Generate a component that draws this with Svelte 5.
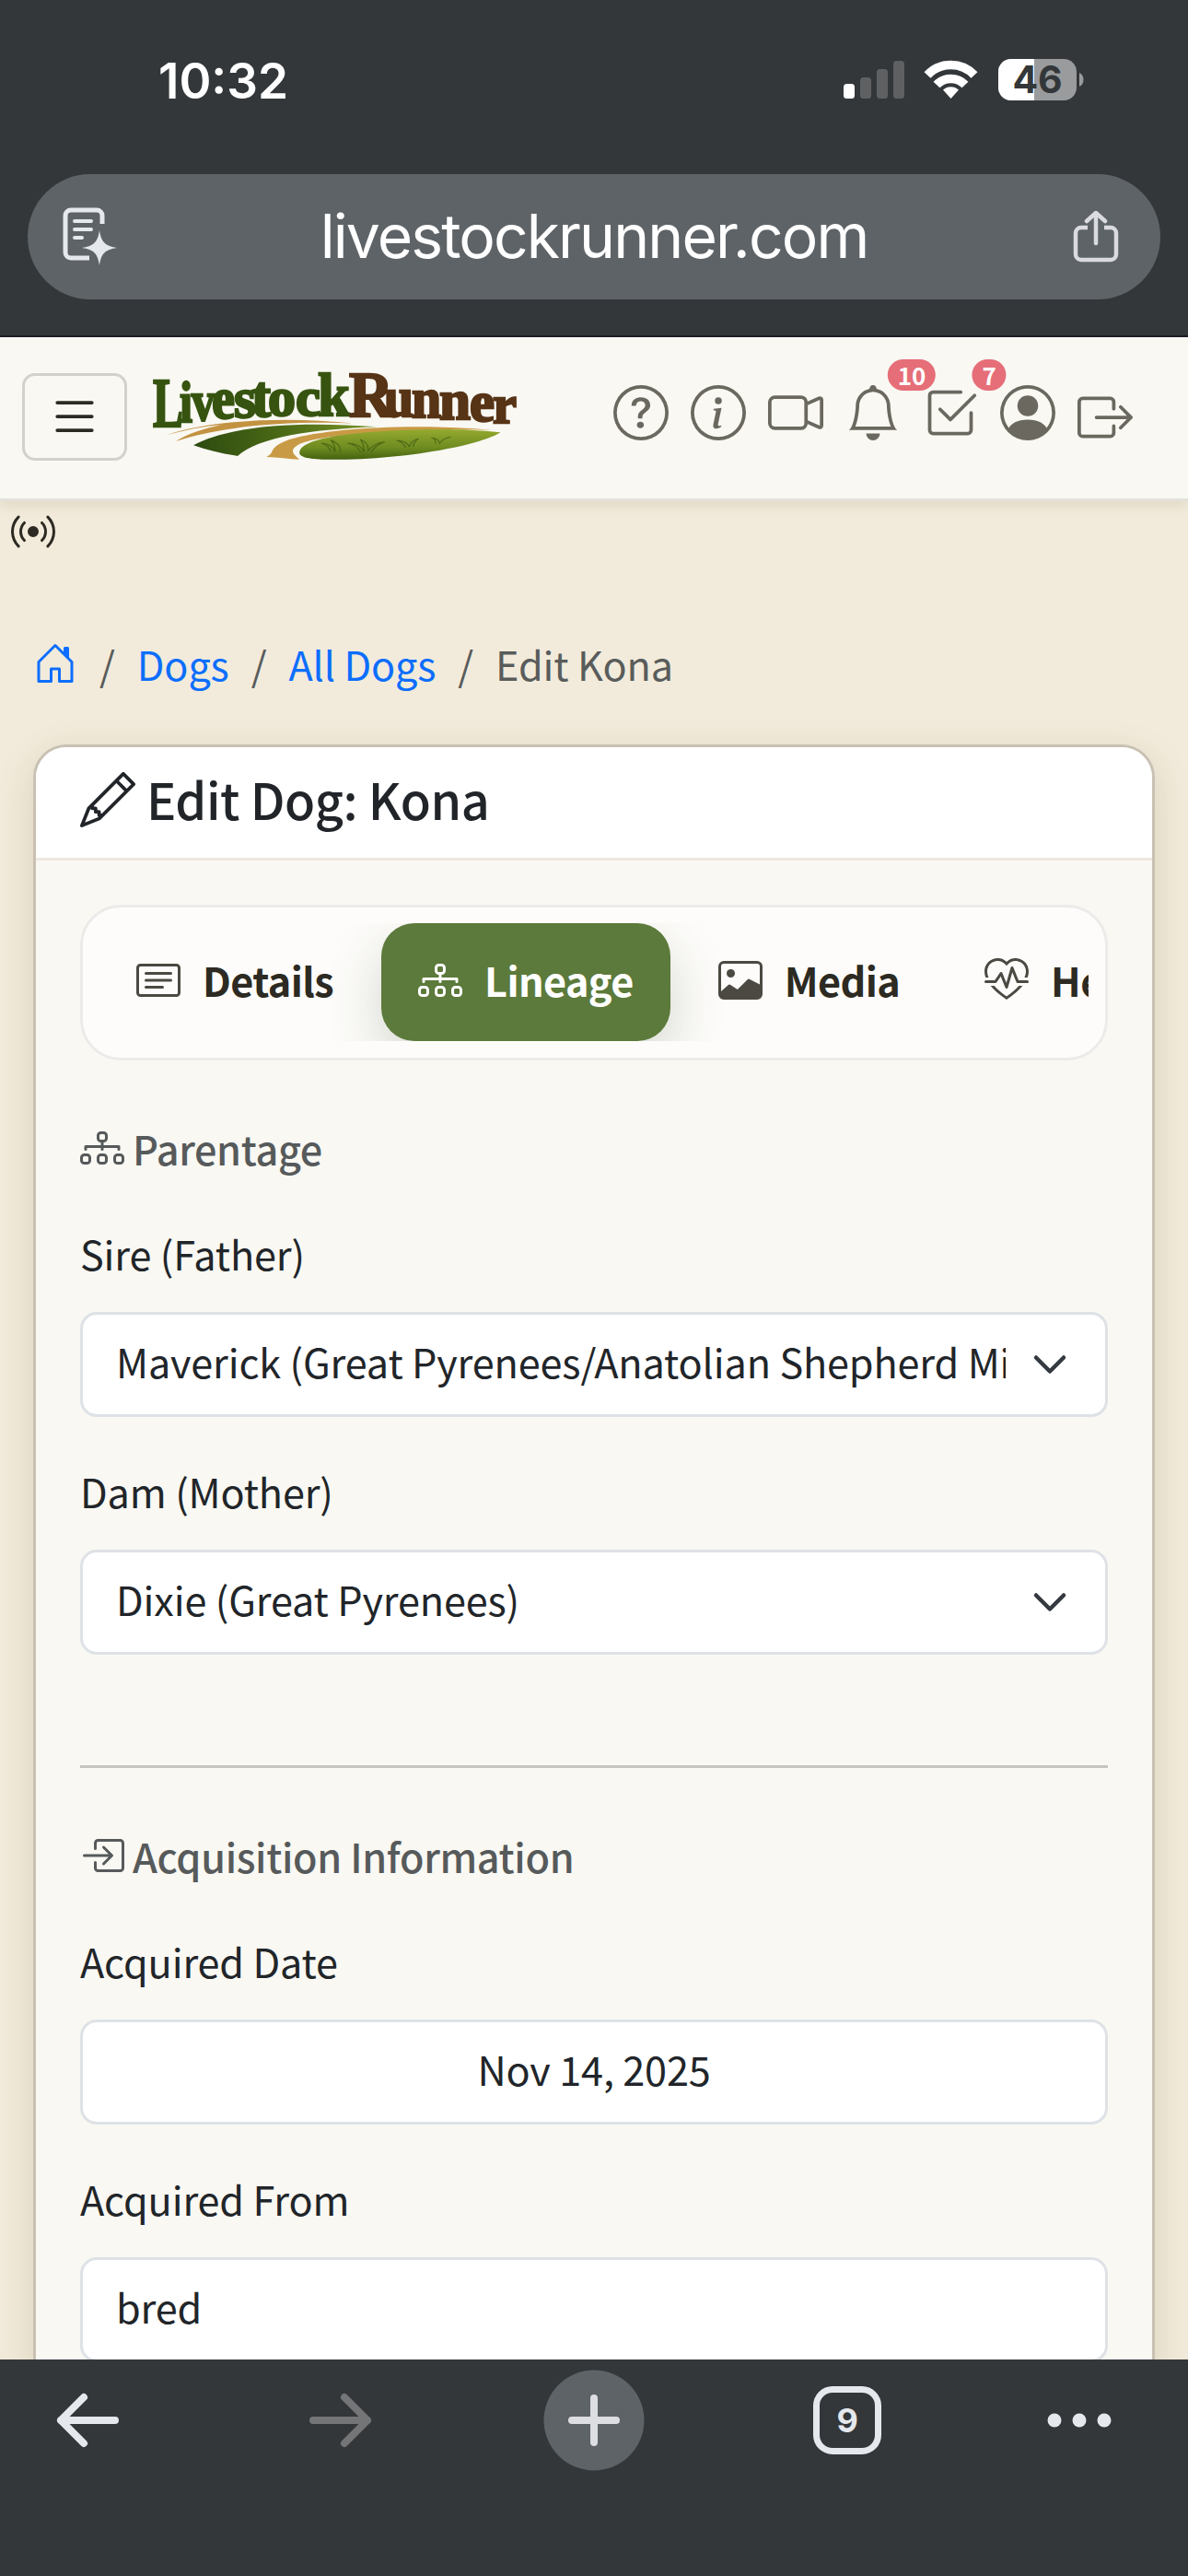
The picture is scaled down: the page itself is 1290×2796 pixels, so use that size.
<script lang="ts">
    // 16x16 icon paths
    const icons: Record<string, string[]> = {
        list: ['M2.5 12a.5.5 0 0 1 .5-.5h10a.5.5 0 0 1 0 1H3a.5.5 0 0 1-.5-.5m0-4a.5.5 0 0 1 .5-.5h10a.5.5 0 0 1 0 1H3a.5.5 0 0 1-.5-.5m0-4a.5.5 0 0 1 .5-.5h10a.5.5 0 0 1 0 1H3a.5.5 0 0 1-.5-.5'],
        question: [
            'M8 15A7 7 0 1 1 8 1a7 7 0 0 1 0 14m0 1A8 8 0 1 0 8 0a8 8 0 0 0 0 16',
            'M5.255 5.786a.237.237 0 0 0 .241.247h.825c.138 0 .248-.113.266-.25.09-.656.54-1.134 1.342-1.134.686 0 1.314.343 1.314 1.168 0 .635-.374.927-.965 1.371-.673.489-1.206 1.06-1.168 1.987l.003.217a.25.25 0 0 0 .25.246h.811a.25.25 0 0 0 .25-.25v-.105c0-.718.273-.927 1.01-1.486.609-.463 1.244-.977 1.244-2.056 0-1.511-1.276-2.241-2.673-2.241-1.267 0-2.655.59-2.75 2.286m1.557 5.763c0 .533.425.927 1.01.927.609 0 1.028-.394 1.028-.927 0-.552-.42-.94-1.029-.94-.584 0-1.009.388-1.009.94'
        ],
        info: [
            'M8 15A7 7 0 1 1 8 1a7 7 0 0 1 0 14m0 1A8 8 0 1 0 8 0a8 8 0 0 0 0 16',
            'm8.93 6.588-2.29.287-.082.38.45.083c.294.07.352.176.288.469l-.738 3.468c-.194.897.105 1.319.808 1.319.545 0 1.178-.252 1.465-.598l.088-.416c-.2.176-.492.246-.686.246-.275 0-.375-.193-.304-.533zM9 4.5a1 1 0 1 1-2 0 1 1 0 0 1 2 0'
        ],
        video: ['M0 5a2 2 0 0 1 2-2h7.5a2 2 0 0 1 1.983 1.738l3.11-1.382A1 1 0 0 1 16 4.269v7.462a1 1 0 0 1-1.406.913l-3.111-1.382A2 2 0 0 1 9.5 13H2a2 2 0 0 1-2-2zm11.5 5.175 3.5 1.556V4.269l-3.5 1.556zM2 4a1 1 0 0 0-1 1v6a1 1 0 0 0 1 1h7.5a1 1 0 0 0 1-1V5a1 1 0 0 0-1-1z'],
        bell: ['M8 16a2 2 0 0 0 2-2H6a2 2 0 0 0 2 2M8 1.918l-.797.161A4 4 0 0 0 4 6c0 .628-.134 2.197-.459 3.742-.16.767-.376 1.566-.663 2.258h10.244c-.287-.692-.502-1.49-.663-2.258C12.134 8.197 12 6.628 12 6a4 4 0 0 0-3.203-3.92zM14.22 12c.223.447.481.801.78 1H1c.299-.199.557-.553.78-1C2.68 10.2 3 6.88 3 6c0-2.42 1.72-4.44 4.005-4.901a1 1 0 1 1 1.99 0A5 5 0 0 1 13 6c0 .88.32 4.2 1.22 6'],
        check: [
            'M3 14.5A1.5 1.5 0 0 1 1.5 13V3A1.5 1.5 0 0 1 3 1.5h8a.5.5 0 0 1 0 1H3a.5.5 0 0 0-.5.5v10a.5.5 0 0 0 .5.5h10a.5.5 0 0 0 .5-.5V8a.5.5 0 0 1 1 0v5a1.5 1.5 0 0 1-1.5 1.5z',
            'm8.354 10.354 7-7a.5.5 0 0 0-.708-.708L8 9.293 5.354 6.646a.5.5 0 1 0-.708.708l3 3a.5.5 0 0 0 .708 0'
        ],
        person: [
            'M11 6a3 3 0 1 1-6 0 3 3 0 0 1 6 0',
            'M0 8a8 8 0 1 1 16 0A8 8 0 0 1 0 8m8-7a7 7 0 0 0-5.468 11.37C3.242 11.226 4.805 10 8 10s4.757 1.225 5.468 2.37A7 7 0 0 0 8 1'
        ],
        logout: [
            'M10 12.5a.5.5 0 0 1-.5.5h-8a.5.5 0 0 1-.5-.5v-9a.5.5 0 0 1 .5-.5h8a.5.5 0 0 1 .5.5v2a.5.5 0 0 0 1 0v-2A1.5 1.5 0 0 0 9.5 2h-8A1.5 1.5 0 0 0 0 3.5v9A1.5 1.5 0 0 0 1.5 14h8a1.5 1.5 0 0 0 1.5-1.5v-2a.5.5 0 0 0-1 0z',
            'M15.854 8.354a.5.5 0 0 0 0-.708l-3-3a.5.5 0 0 0-.708.708L14.293 7.5H5.5a.5.5 0 0 0 0 1h8.793l-2.147 2.146a.5.5 0 0 0 .708.708z'
        ],
        login: [
            'M6 3.5a.5.5 0 0 1 .5-.5h8a.5.5 0 0 1 .5.5v9a.5.5 0 0 1-.5.5h-8a.5.5 0 0 1-.5-.5v-2a.5.5 0 0 0-1 0v2A1.5 1.5 0 0 0 6.5 14h8a1.5 1.5 0 0 0 1.5-1.5v-9A1.5 1.5 0 0 0 14.5 2h-8A1.5 1.5 0 0 0 5 3.5v2a.5.5 0 0 0 1 0z',
            'M11.854 8.354a.5.5 0 0 0 0-.708l-3-3a.5.5 0 1 0-.708.708L10.293 7.5H1.5a.5.5 0 0 0 0 1h8.793l-2.147 2.146a.5.5 0 0 0 .708.708z'
        ],
        broadcast: ['M3.05 3.05a7 7 0 0 0 0 9.9.5.5 0 0 1-.707.707 8 8 0 0 1 0-11.314.5.5 0 0 1 .707.707m2.122 2.122a4 4 0 0 0 0 5.656.5.5 0 1 1-.708.708 5 5 0 0 1 0-7.072.5.5 0 0 1 .708.708m5.656-.708a.5.5 0 0 1 .708 0 5 5 0 0 1 0 7.072.5.5 0 1 1-.708-.708 4 4 0 0 0 0-5.656.5.5 0 0 1 0-.708m2.122-2.12a.5.5 0 0 1 .707 0 8 8 0 0 1 0 11.313.5.5 0 0 1-.707-.707 7 7 0 0 0 0-9.9.5.5 0 0 1 0-.707zM10 8a2 2 0 1 1-4 0 2 2 0 0 1 4 0'],
        house: ['M8.354 1.146a.5.5 0 0 0-.708 0l-6 6A.5.5 0 0 0 1.5 7.5v7a.5.5 0 0 0 .5.5h4.5a.5.5 0 0 0 .5-.5v-4h2v4a.5.5 0 0 0 .5.5H14a.5.5 0 0 0 .5-.5v-7a.5.5 0 0 0-.146-.354L13 5.793V2.5a.5.5 0 0 0-.5-.5h-1a.5.5 0 0 0-.5.5v1.293zM2.5 14V7.707l5.5-5.5 5.5 5.5V14H10v-4a.5.5 0 0 0-.5-.5h-3a.5.5 0 0 0-.5.5v4z'],
        pencil: ['M12.146.146a.5.5 0 0 1 .708 0l3 3a.5.5 0 0 1 0 .708l-10 10a.5.5 0 0 1-.168.11l-5 2a.5.5 0 0 1-.65-.65l2-5a.5.5 0 0 1 .11-.168zM11.207 2.5 13.5 4.793 14.793 3.5 12.5 1.207zm1.586 3L10.5 3.207 4 9.707V10h.5a.5.5 0 0 1 .5.5v.5h.5a.5.5 0 0 1 .5.5v.5h.293zm-9.761 5.175-.106.106-1.528 3.821 3.821-1.528.106-.106A.5.5 0 0 1 5 12.5V12h-.5a.5.5 0 0 1-.5-.5V11h-.5a.5.5 0 0 1-.468-.325'],
        card: [
            'M14.5 3a.5.5 0 0 1 .5.5v9a.5.5 0 0 1-.5.5h-13a.5.5 0 0 1-.5-.5v-9a.5.5 0 0 1 .5-.5zm-13-1A1.5 1.5 0 0 0 0 3.5v9A1.5 1.5 0 0 0 1.5 14h13a1.5 1.5 0 0 0 1.5-1.5v-9A1.5 1.5 0 0 0 14.5 2z',
            'M3 5.5a.5.5 0 0 1 .5-.5h9a.5.5 0 0 1 0 1h-9a.5.5 0 0 1-.5-.5M3 8a.5.5 0 0 1 .5-.5h9a.5.5 0 0 1 0 1h-9A.5.5 0 0 1 3 8m0 2.5a.5.5 0 0 1 .5-.5h6a.5.5 0 0 1 0 1h-6a.5.5 0 0 1-.5-.5'
        ],
        diagram: ['M6 3.5A1.5 1.5 0 0 1 7.5 2h1A1.5 1.5 0 0 1 10 3.5v1A1.5 1.5 0 0 1 8.5 6v1H14a.5.5 0 0 1 .5.5v1a.5.5 0 0 1-1 0V8h-5v.5a.5.5 0 0 1-1 0V8h-5v.5a.5.5 0 0 1-1 0v-1A.5.5 0 0 1 2 7h5.5V6A1.5 1.5 0 0 1 6 4.5zM8.5 5a.5.5 0 0 0 .5-.5v-1a.5.5 0 0 0-.5-.5h-1a.5.5 0 0 0-.5.5v1a.5.5 0 0 0 .5.5zM0 11.5A1.5 1.5 0 0 1 1.5 10h1A1.5 1.5 0 0 1 4 11.5v1A1.5 1.5 0 0 1 2.5 14h-1A1.5 1.5 0 0 1 0 12.5zm1.5-.5a.5.5 0 0 0-.5.5v1a.5.5 0 0 0 .5.5h1a.5.5 0 0 0 .5-.5v-1a.5.5 0 0 0-.5-.5zm4.5.5A1.5 1.5 0 0 1 7.5 10h1a1.5 1.5 0 0 1 1.5 1.5v1A1.5 1.5 0 0 1 8.5 14h-1A1.5 1.5 0 0 1 6 12.5zm1.5-.5a.5.5 0 0 0-.5.5v1a.5.5 0 0 0 .5.5h1a.5.5 0 0 0 .5-.5v-1a.5.5 0 0 0-.5-.5zm4.5.5a1.5 1.5 0 0 1 1.5-1.5h1a1.5 1.5 0 0 1 1.5 1.5v1a1.5 1.5 0 0 1-1.5 1.5h-1a1.5 1.5 0 0 1-1.5-1.5zm1.5-.5a.5.5 0 0 0-.5.5v1a.5.5 0 0 0 .5.5h1a.5.5 0 0 0 .5-.5v-1a.5.5 0 0 0-.5-.5z'],
        image: [
            'M6.002 5.5a1.5 1.5 0 1 1-3 0 1.5 1.5 0 0 1 3 0',
            'M2.002 1a2 2 0 0 0-2 2v10a2 2 0 0 0 2 2h12a2 2 0 0 0 2-2V3a2 2 0 0 0-2-2zm12 1a1 1 0 0 1 1 1v6.5l-3.777-1.947a.5.5 0 0 0-.577.093l-3.71 3.71-2.66-1.772a.5.5 0 0 0-.63.062L1.002 12V3a1 1 0 0 1 1-1z'
        ],
        heart: [
            'm8 2.748-.717-.737C5.6.281 2.514.878 1.4 3.053.918 3.995.78 5.323 1.508 7H.43c-2.128-5.697 4.165-8.83 7.394-5.857q.09.083.176.171a3 3 0 0 1 .176-.17c3.23-2.974 9.522.159 7.394 5.856h-1.078c.728-1.677.59-3.005.108-3.947C13.486.878 10.4.28 8.717 2.01zM2.212 10h1.315C4.593 11.183 6.05 12.458 8 13.795c1.949-1.337 3.407-2.612 4.473-3.795h1.315c-1.265 1.566-3.14 3.25-5.788 5-2.648-1.75-4.523-3.434-5.788-5',
            'M10.464 3.314a.5.5 0 0 0-.945.049L7.921 8.956 6.464 5.314a.5.5 0 0 0-.88-.091L3.732 8H.5a.5.5 0 0 0 0 1H4a.5.5 0 0 0 .416-.223l1.473-2.209 1.647 4.118a.5.5 0 0 0 .945-.049l1.598-5.593 1.457 3.642A.5.5 0 0 0 12 9h3.5a.5.5 0 0 0 0-1h-3.162z'
        ]
    };

    const navIcons = [
        { name: 'question' },
        { name: 'info' },
        { name: 'video' },
        { name: 'bell', badge: 10 },
        { name: 'check', badge: 7 },
        { name: 'person' },
        { name: 'logout' }
    ];

    const tabs = [
        { icon: 'card', label: 'Details' },
        { icon: 'diagram', label: 'Lineage' },
        { icon: 'image', label: 'Media' },
        { icon: 'heart', label: 'Health' }
    ];
    let activeTab = 'Lineage';

    // logo lettering: character, left, baseline, font size, width
    type Letter = [string, number, number, number, number];
    const green: Letter[] = [
        ['L', 1, 62, 76, 33],
        ['i', 30, 57, 64, 14],
        ['v', 43, 55, 62, 25],
        ['e', 65, 53, 63, 25],
        ['s', 89, 52, 62, 24],
        ['t', 108, 51, 63, 21],
        ['o', 126, 50, 60, 30],
        ['c', 156, 50, 60, 27],
        ['k', 180, 50, 66, 35]
    ];
    const brown: Letter[] = [
        ['R', 214, 51, 70, 48],
        ['u', 252, 51, 61, 32],
        ['n', 282, 52, 61, 32],
        ['n', 312, 54, 61, 34],
        ['e', 345, 56, 61, 27],
        ['r', 370, 58, 60, 26]
    ];

    let sire = 'Maverick (Great Pyrenees/Anatolian Shepherd Mix)';
    let dam = 'Dixie (Great Pyrenees)';
    let acquiredDate = 'Nov 14, 2025';
    let acquiredFrom = 'bred';
</script>

{#snippet icon(name: string)}
    <svg class="icon" viewBox="0 0 16 16" fill="currentColor" fill-rule="evenodd">
        {#each icons[name] as d}
            <path {d} />
        {/each}
    </svg>
{/snippet}

{#snippet lettering(letters: Letter[], color: string)}
    <text class="lettering" fill={color} stroke={color}>{#each letters as [ch, x, y, size, width]}<tspan {x} {y} font-size={size} textLength={width} lengthAdjust="spacingAndGlyphs">{ch}</tspan>{/each}</text>
{/snippet}

{#snippet select(value: string)}
    <div class="control select">
        <span class="value">{value}</span>
        <svg class="chevron" viewBox="0 0 16 16" fill="none" stroke="#343a40" stroke-width="1.800" stroke-linecap="round" stroke-linejoin="round">
            <path d="m2 5 6 6 6-6" />
        </svg>
    </div>
{/snippet}

<div class="phone">
    <header class="browser">
        <div class="status">
            <span class="time">10:32</span>
            <svg class="status-icons" viewBox="0 0 264 48">
                <rect x="1" y="28" width="12" height="16" rx="3.5" fill="#fff" />
                <rect x="19" y="21" width="12" height="23" rx="3.5" fill="#5f6062" />
                <rect x="37" y="12" width="12" height="32" rx="3.5" fill="#5f6062" />
                <rect x="55" y="3" width="12" height="41" rx="3.5" fill="#5f6062" />
                <g fill="none" stroke="#fff" stroke-width="9.5">
                    <path d="M92 18.5a35 35 0 0 1 51 0" />
                    <path d="M102 29a21.500 21.500 0 0 1 31 0" />
                </g>
                <path d="M117.500 44l-8.500-9.500a12.500 12.500 0 0 1 17 0z" fill="#fff" />
                <rect x="169" y="1" width="85" height="45" rx="14" fill="#9a9b9d" />
                <path d="M208 1v45h-25a14 14 0 0 1-14-14V15a14 14 0 0 1 14-14z" fill="#fff" />
                <path d="M257 16c6 2 6 13 0 15z" fill="#9a9b9d" />
                <text x="211.500" y="38" text-anchor="middle" class="battery">46</text>
            </svg>
        </div>
        <div class="address">
            <svg class="reader" viewBox="0 0 60 64" fill="none" stroke="#e5e8ec" stroke-width="5" stroke-linecap="round">
                <path d="M43 18V9a6 6 0 0 0-6-6H9a6 6 0 0 0-6 6v40a6 6 0 0 0 6 6h20" stroke-linecap="butt" />
                <path d="M13 15h18M13 24h18M13 33h8" stroke-width="4" />
                <path d="M40 25c2 13 6 17 19 19-13 2-17 6-19 19-2-13-6-17-19-19 13-2 17-6 19-19z" fill="#e5e8ec" stroke="none" />
            </svg>
            <span class="url">livestockrunner.com</span>
            <svg class="share" viewBox="0 0 50 58" fill="none" stroke="#d9dbe0" stroke-width="4.500" stroke-linecap="round" stroke-linejoin="round">
                <path d="M16 19H9a6 6 0 0 0-6 6v23a6 6 0 0 0 6 6h32a6 6 0 0 0 6-6V25a6 6 0 0 0-6-6h-7" stroke-linecap="butt" />
                <path d="M25 36V3M15 12 25 3l10 9" />
            </svg>
        </div>
    </header>

    <main class="page">
        <nav class="navbar">
            <button class="menu" aria-label="Menu">{@render icon('list')}</button>
            <svg class="logo" viewBox="0 0 400 100">
                <defs>
                    <linearGradient id="dark-hill" x1="0" x2="1">
                        <stop offset="0" stop-color="#2c4a10" />
                        <stop offset=".5" stop-color="#4c6b16" />
                        <stop offset="1" stop-color="#7c9428" />
                    </linearGradient>
                    <linearGradient id="light-hill" x1="0" y1="0" x2="0" y2="1">
                        <stop offset="0" stop-color="#94a92e" />
                        <stop offset=".6" stop-color="#6f8c21" />
                        <stop offset="1" stop-color="#44620f" />
                    </linearGradient>
                </defs>
                {@render lettering(green, '#365410')}
                {@render lettering(brown, '#573416')}
                <g transform="translate(-165 -30) scale(.408 .333)">
                    <path d="M445 303C560 255 760 242 940 266 790 258 600 270 468 324 500 298 540 284 590 270 540 276 490 288 445 303z" fill="#c39342" />
                    <path d="M515 337C620 270 800 260 1003 277 830 285 690 310 632 372 590 364 550 352 515 337z" fill="url(#dark-hill)" />
                    <path d="M709 375C735 360 710 345 770 318 880 278 1120 265 1310 288 1120 280 850 300 795 335 765 355 785 370 797 384 770 381 740 376 709 375z" fill="#c99a45" />
                    <path d="M797 362C797 325 880 300 1040 290 1150 283 1250 284 1332 295 1280 335 1120 372 960 382 880 385 797 388 797 362z" fill="url(#light-hill)" />
                    <path d="M560 338q15-20 8-27 20 10 15 27 10-28 30-32-12 12-18 32 20-22 45-20-25 8-40 24M880 358q-5-20-25-28 30 4 37 28 0-25-12-38 28 14 26 38M960 360q-10-25-35-30 35 2 44 28 0-25-10-40 25 14 20 38 15-25 45-30-25 10-36 34M1080 345q-8-20-25-24 30 2 34 22 5-22 25-28-14 12-14 28M1160 332q0-15-12-20 20 4 22 18 10-16 30-20" fill="none" stroke="#3d5a10" stroke-width="3" opacity=".75" />
                </g>
            </svg>
            <div class="nav-icons">
                {#each navIcons as item}
                    <div class="nav-icon" class:low={item.name === 'logout'}>
                        {@render icon(item.name)}
                        {#if item.badge}
                            <span class="badge">{item.badge}</span>
                        {/if}
                    </div>
                {/each}
            </div>
        </nav>

        <div class="live">{@render icon('broadcast')}</div>

        <div class="breadcrumb">
            <a href="#home" aria-label="Home">{@render icon('house')}</a>
            <span>/</span>
            <a href="#dogs">Dogs</a>
            <span>/</span>
            <a href="#all">All Dogs</a>
            <span>/</span>
            <span>Edit Kona</span>
        </div>

        <section class="card">
            <h1>{@render icon('pencil')}<span>Edit Dog: Kona</span></h1>
            <div class="card-body">
                <div class="tabs">
                    <div class="tab-scroll">
                        {#each tabs as tab}
                            <div class="tab" class:active={tab.label === activeTab}>
                                {@render icon(tab.icon)}
                                <span>{tab.label}</span>
                            </div>
                        {/each}
                    </div>
                </div>

                <h2>{@render icon('diagram')}Parentage</h2>
                <div class="field">
                    <div class="label">Sire (Father)</div>
                    {@render select(sire)}
                </div>
                <div class="field">
                    <div class="label">Dam (Mother)</div>
                    {@render select(dam)}
                </div>

                <hr />

                <h2>{@render icon('login')}Acquisition Information</h2>
                <div class="field">
                    <div class="label">Acquired Date</div>
                    <div class="control date">{acquiredDate}</div>
                </div>
                <div class="field">
                    <div class="label">Acquired From</div>
                    <div class="control">{acquiredFrom}</div>
                </div>
            </div>
        </section>
    </main>

    <footer class="toolbar">
        <svg viewBox="0 0 70 60" class="arrow back">
            <path d="M65 30H6M31 5 6 30l25 25" />
        </svg>
        <svg viewBox="0 0 70 60" class="arrow forward">
            <path d="M5 30h59M39 5l25 25-25 25" />
        </svg>
        <svg viewBox="0 0 110 110" class="plus">
            <circle cx="55" cy="55" r="54.500" fill="#5e6367" />
            <path d="M55 31v48M31 55h48" stroke="#dcdee2" stroke-width="8" stroke-linecap="round" />
        </svg>
        <div class="tab-count">9</div>
        <svg viewBox="0 0 70 16" class="dots" fill="#e5e8ec">
            <circle cx="8" cy="8" r="7.500" />
            <circle cx="35" cy="8" r="7.500" />
            <circle cx="62" cy="8" r="7.500" />
        </svg>
    </footer>
</div>

<style>
:global(body) {
    margin: 0;
    background: #33373a;
}

.phone {
    width: 1290px;
    height: 2796px;
    display: flex;
    flex-direction: column;
    overflow: hidden;
    font-family: "Noto Sans CJK SC", "Noto Sans", sans-serif;
    font-size: 43.2px;
    letter-spacing: -0.14px;
    line-height: 72px;
    color: #212529;
}

.phone * {
    box-sizing: border-box;
}

svg {
    display: block;
    flex: none;
}

.icon {
    width: 48px;
    height: 48px;
}

/* Browser chrome */
.browser {
    flex: none;
    height: 366px;
    background: #33373a;
    border-bottom: 2px solid #1f1a26;
    font-family: Inter, sans-serif;
}

.status {
    display: flex;
    justify-content: space-between;
    height: 189px;
    padding: 52px 111px 0 172px;
}

.time {
    color: #fff;
    font-size: 53px;
    font-weight: 600;
    letter-spacing: 0;
}

.status-icons {
    width: 264px;
    height: 48px;
    margin-top: 11px;
}

.battery {
    font-size: 41px;
    font-weight: 700;
    fill: #33373a;
}

.address {
    display: flex;
    align-items: center;
    justify-content: space-between;
    height: 136px;
    margin: 0 30px;
    padding: 0 45px 0 38px;
    border-radius: 68px;
    background: #5e6367;
}

.reader {
    width: 60px;
    height: 64px;
}

.url {
    padding: 0 3px 3px 0;
    color: #fff;
    font-size: 66px;
    letter-spacing: -1.9px;
}

.share {
    width: 50px;
    height: 58px;
}

/* Page */
.page {
    flex: none;
    height: 2195px;
    overflow: hidden;
    background: #f2ebdb;
}

.navbar {
    display: flex;
    align-items: flex-start;
    height: 178px;
    padding: 37px 60px 0 24px;
    background: #f9f8f3;
    border-bottom: 3px solid #e3e1da;
    box-shadow: 0 6px 12px rgba(80, 60, 20, 0.09);
}

.menu {
    display: flex;
    align-items: center;
    justify-content: center;
    width: 114px;
    height: 95px;
    margin-top: 2px;
    padding: 0 0 2px;
    background: none;
    border: 3px solid #d2d1cb;
    border-radius: 14px;
    color: #2c2a22;
}

.menu .icon,
.nav-icon .icon {
    width: 60px;
    height: 60px;
}

.logo {
    width: 400px;
    height: 100px;
    margin-left: 27px;
    margin-top: -2px;
    overflow: visible;
}

.lettering {
    font-family: "Liberation Serif", serif;
    font-weight: 700;
    letter-spacing: 0;
    stroke-width: 2.4;
}

.nav-icons {
    display: flex;
    gap: 24px;
    margin-left: auto;
    padding-top: 15px;
    color: #6b6860;
}

.nav-icon {
    position: relative;
}

.low {
    padding-top: 5px;
}

.badge {
    position: absolute;
    left: 72px;
    top: -28px;
    height: 34px;
    padding: 0 11px;
    border-radius: 17px;
    background: #e66e78;
    color: #fff;
    font-size: 26px;
    font-weight: 700;
    line-height: 33px;
    transform: translateX(-50%);
}

.live {
    height: 140px;
    padding: 9px 12px;
    color: #2c2a22;
}

.breadcrumb {
    display: flex;
    gap: 24px;
    align-items: center;
    margin-left: 36px;
    height: 72px;
    color: #595c5b;
}

.breadcrumb a {
    color: #0d6efd;
    text-decoration: none;
}

.card {
    margin: 52px 36px 0;
    height: 1900px;
    border: 3px solid #c9c1b3;
    border-radius: 36px;
    background: #f9f8f3;
    box-shadow: 0 12px 42px rgba(100, 75, 30, 0.16);
    overflow: hidden;
}

h1 {
    display: flex;
    align-items: center;
    gap: 12px;
    height: 123px;
    margin: 0;
    padding: 0 48px 6px;
    background: #fff;
    border-bottom: 3px solid #ede8df;
    font-size: 54px;
    font-weight: 500;
    letter-spacing: -0.45px;
}

h1 .icon {
    width: 60px;
    height: 60px;
}

h1 span {
    padding-bottom: 3px;
}

.card-body {
    padding: 48px;
}

.tabs {
    height: 169px;
    padding: 17px 18px 18px;
    border: 3px solid #ebebe9;
    border-radius: 44px;
    background: #fdfcfa;
}

.tab-scroll {
    display: flex;
    gap: 12px;
    height: 128px;
    overflow: hidden;
}

.tab {
    display: flex;
    flex: none;
    align-items: center;
    gap: 24px;
    padding: 0 40px;
    border-radius: 36px;
    color: #2c2a22;
    font-weight: 600;
    letter-spacing: -0.6px;
}

.tab .icon {
    margin-top: -4px;
    opacity: 0.85;
}

.tab span {
    padding-bottom: 6px;
}

.tab.active {
    background: #5c7a3b;
    color: #fff;
    box-shadow: 0 24px 60px rgba(44, 66, 30, 0.2);
}

.tab.active .icon {
    opacity: 1;
}

h2 {
    display: flex;
    align-items: center;
    gap: 9px;
    height: 58px;
    margin: 66px 0 49px;
    color: #575a5b;
    font-size: 43.2px;
    font-weight: 500;
    letter-spacing: -0.35px;
    line-height: 58px;
}

.field {
    margin-bottom: 44px;
}

.label {
    margin-bottom: 28px;
}

.control {
    height: 114px;
    padding: 14px 36px;
    border: 3px solid #dee2e6;
    border-radius: 18px;
    background: #fff;
}

.select {
    display: flex;
    justify-content: space-between;
    padding-right: 40px;
}

.value {
    width: 966px;
    overflow: hidden;
    white-space: nowrap;
}

.chevron {
    width: 40px;
    height: 40px;
    margin-top: 20px;
}

.date {
    text-align: center;
}

hr {
    height: 3px;
    margin: 120px 0 0;
    border: 0;
    background: #c5c4bf;
}

/* Bottom toolbar */
.toolbar {
    display: grid;
    grid-template-columns: 275px 255px 293px 254px auto;
    align-items: center;
    height: 110px;
    margin-top: 11px;
    padding-left: 60px;
}

.arrow {
    width: 70px;
    height: 60px;
    fill: none;
    stroke: #e5e8ec;
    stroke-width: 8;
    stroke-linecap: round;
    stroke-linejoin: round;
}

.forward {
    stroke: #747577;
}

.plus {
    width: 110px;
    height: 110px;
}

.tab-count {
    width: 74px;
    height: 74px;
    border: 7px solid #e5e8ec;
    border-radius: 21px;
    color: #e5e8ec;
    font: 700 36px/61px Inter, sans-serif;
    text-align: center;
}

.dots {
    width: 70px;
    height: 16px;
}
</style>
